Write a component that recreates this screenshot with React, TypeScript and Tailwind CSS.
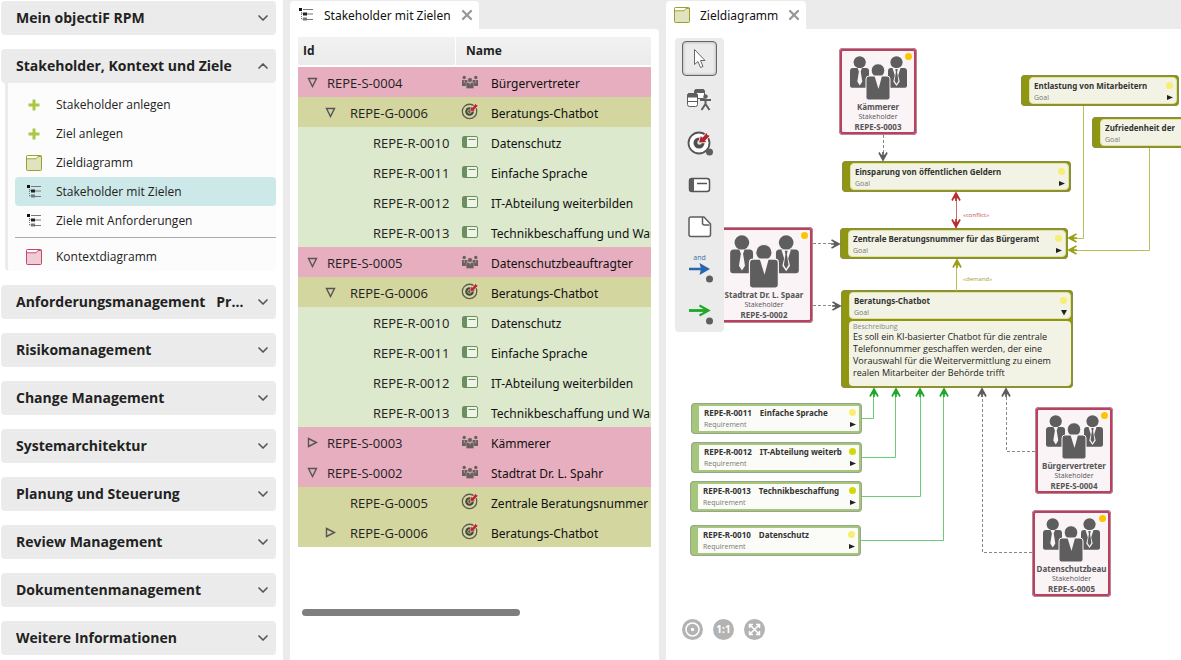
import React, { useState } from 'react'
import { ChevronDown, ChevronUp, X } from 'lucide-react'

type RowKind = 'stakeholder' | 'goal' | 'requirement'

interface TreeRow {
  id: string
  name: string
  kind: RowKind
  state?: 'open' | 'closed'
}

const requirementRows: TreeRow[] = [
  { id: 'REPE-R-0010', name: 'Datenschutz', kind: 'requirement' },
  { id: 'REPE-R-0011', name: 'Einfache Sprache', kind: 'requirement' },
  { id: 'REPE-R-0012', name: 'IT-Abteilung weiterbilden', kind: 'requirement' },
  { id: 'REPE-R-0013', name: 'Technikbeschaffung und Wartung', kind: 'requirement' }
]

const rows: TreeRow[] = [
  { id: 'REPE-S-0004', name: 'Bürgervertreter', kind: 'stakeholder', state: 'open' },
  { id: 'REPE-G-0006', name: 'Beratungs-Chatbot', kind: 'goal', state: 'open' },
  ...requirementRows,
  { id: 'REPE-S-0005', name: 'Datenschutzbeauftragter', kind: 'stakeholder', state: 'open' },
  { id: 'REPE-G-0006', name: 'Beratungs-Chatbot', kind: 'goal', state: 'open' },
  ...requirementRows,
  { id: 'REPE-S-0003', name: 'Kämmerer', kind: 'stakeholder', state: 'closed' },
  { id: 'REPE-S-0002', name: 'Stadtrat Dr. L. Spahr', kind: 'stakeholder', state: 'open' },
  { id: 'REPE-G-0005', name: 'Zentrale Beratungsnummer', kind: 'goal' },
  { id: 'REPE-G-0006', name: 'Beratungs-Chatbot', kind: 'goal', state: 'closed' }
]

const rowColors: Record<RowKind, string> = {
  stakeholder: 'bg-[#e7aebf]',
  goal: 'bg-[#d3d69f]',
  requirement: 'bg-[#dce9cd]'
}

const rowIndent: Record<RowKind, string> = {
  stakeholder: 'pl-[9px]',
  goal: 'pl-[27px]',
  requirement: 'pl-[50px]'
}

const toggleWidth: Record<RowKind, string> = {
  stakeholder: 'w-5',
  goal: 'w-[25px]',
  requirement: 'w-[25px]'
}

const lowerSections = [
  'Anforderungsmanagement\u00a0\u00a0\u00a0Projektmanagement',
  'Risikomanagement',
  'Change Management',
  'Systemarchitektur',
  'Planung und Steuerung',
  'Review Management',
  'Dokumentenmanagement',
  'Weitere Informationen'
]

/* ---------- Icons ---------- */

const PlusIcon = () => (
  <svg width="16" height="16" viewBox="0 0 16 16">
    <path d="M6.5 2.5h3v4h4v3h-4v4h-3v-4h-4v-3h4z" fill="#a9c843" />
  </svg>
)

const DiagramIcon = ({ stroke, fill }: { stroke: string; fill: string }) => (
  <svg width="16" height="16" viewBox="0 0 16 16">
    <rect x="0.5" y="0.5" width="15" height="15" rx="1" fill={fill} stroke={stroke} />
    <path d="M1 1h11l-2 2.5H1z" fill="#fff" />
    <path d="M0.5 3.8h9.5l2-2.3h3.5" fill="none" stroke={stroke} strokeWidth="0.9" />
  </svg>
)

const TreeIcon = () => (
  <svg width="16" height="16" viewBox="0 0 16 16">
    <path d="M3.5 3v9.5M3.5 6.5h3M3.5 12h3" stroke="#777" strokeDasharray="1 1" fill="none" />
    <path d="M5 2.5h10M8 7h7M8 12.5h7" stroke="#777" />
    <rect x="1" y="1" width="3" height="3" fill="#111" />
    <rect x="5" y="5.5" width="4" height="3" fill="#222" />
    <rect x="5" y="10.5" width="4" height="3" fill="#777" />
  </svg>
)

const PeopleIcon = () => (
  <svg width="18" height="14" viewBox="0 0 18 14" fill="#66605f">
    <circle cx="3.2" cy="2.5" r="1.7" />
    <circle cx="14.8" cy="2.5" r="1.7" />
    <path d="M1 5h5.500v6H1zM11.500 5H17v6h-5.500z" />
    <path d="M3.300 5v3M14.700 5v3" stroke="#e7aebf" strokeWidth="0.6" />
    <path d="M5.200 7.500h7.600v6H5.200z" stroke="#e7aebf" strokeWidth="0.4" />
    <circle cx="9" cy="5" r="2.300" stroke="#e7aebf" strokeWidth="0.4" />
    <path d="M8.200 7.600h1.600L9 10z" fill="#e7aebf" />
  </svg>
)

const TargetIcon = () => (
  <svg width="18" height="18" viewBox="0 0 20 20" className="mb-0.5">
    <circle cx="9.500" cy="10.500" r="8" fill="none" stroke="#5a5a50" strokeWidth="1.400" />
    <circle cx="9.500" cy="10.500" r="4.800" fill="#45453f" />
    <path d="M9.500 8.500a2 2 0 1 0 2 2" fill="none" stroke="#d3d69f" />
    <path d="M10 10.500l1-5.500 2 .8L16.500 1l.8 2.200 2.200.8-4.700 4.300 1 1.700z" fill="#c3222b" stroke="#eeeed8" strokeWidth="0.600" />
  </svg>
)

const CardIcon = () => (
  <svg width="16" height="12" viewBox="0 0 16 12">
    <rect x="0.5" y="0.5" width="15" height="11" rx="1.5" fill="#eef5e7" stroke="#6b8f5e" />
    <path d="M1 1h4v10H1z" fill="#6b8f5e" />
    <path d="M6.500 3.500h7" stroke="#6b8f5e" />
  </svg>
)

const StakeholderFigure = ({ width, height }: { width: number; height: number }) => (
  <svg width={width} height={height} viewBox="0 0 57 44" fill="#5e5e5e" className="shrink-0">
    <circle cx="9.7" cy="6.3" r="6.1" />
    <circle cx="46.5" cy="6.3" r="6.1" />
    <path d="M0 15q0-3 3-3h13q3 0 3 3v16.700H2q-2 0-2-2z" />
    <path d="M38 15q0-3 3-3h13q3 0 3 3v14.700q0 2-2 2H38z" />
    <path d="M7.500 12h4.500l-1.300 3.500 1.600 10-2.500 4-2.500-4 1.600-10z" fill="#faf4f7" />
    <path d="M42.500 12h8l-2.300 7.500 1.500 6-3.200 4.500-3.200-4.500 1.500-6z" fill="#faf4f7" />
    <path d="M45.300 13h2.400l-.6 3 1.300 9-1.900 3-1.900-3 1.300-9z" />
    <circle cx="28" cy="14.500" r="6.800" stroke="#faf4f7" strokeWidth="1" />
    <path d="M16 23q0-3 3-3h18q3 0 3 3v18.500q0 2.500-2.500 2.500h-19q-2.500 0-2.500-2.500z" stroke="#faf4f7" strokeWidth="1" />
    <path d="M24.500 20h7.500l-3.500 13z" fill="#faf4f7" />
  </svg>
)

const Triangle = ({ open }: { open: boolean }) => (
  <svg width="11" height="11" viewBox="0 0 11 11" fill="none" stroke="#555" strokeWidth="1.4">
    {open ? <path d="M1.500 1.500h8L5.500 9.500z" /> : <path d="M1.500 1.500v8l8-4z" />}
  </svg>
)

/* ---------- Sidebar ---------- */

const SectionHeader = ({ title, open = false }: { title: string; open?: boolean }) => (
  <button
    type="button"
    aria-expanded={open}
    className="flex h-[34px] w-full shrink-0 items-center justify-between rounded bg-[#ebebeb] pr-[5px] pl-[15px] text-left"
  >
    <span className="w-[229px] truncate text-sm font-bold text-[#222]">{title}</span>
    {open ? (
      <ChevronUp className="h-4 w-4 text-[#555]" strokeWidth={2.5} />
    ) : (
      <ChevronDown className="h-4 w-4 text-[#555]" strokeWidth={2.5} />
    )}
  </button>
)

interface SidebarLinkProps {
  icon: React.ReactNode
  label: string
  active?: boolean
}

const SidebarLink: React.FC<SidebarLinkProps> = ({ icon, label, active }) => (
  <a
    href="#"
    className={`flex h-[29px] items-center gap-3.5 rounded pl-[11px] text-xs text-[#222] ${active ? 'bg-[#cde8e8]' : ''}`}
  >
    {icon}
    {label}
  </a>
)

const Sidebar = () => (
  <nav className="flex w-[283px] shrink-0 flex-col gap-3.5 bg-white pt-px pr-[7px] pl-px">
    <SectionHeader title="Mein objectiF RPM" />
    <div>
      <SectionHeader title="Stakeholder, Kontext und Ziele" open />
      <div className="ml-1 rounded-b border-l-3 border-[#ebebeb] bg-[#fcfcfc] pt-[7px] pl-[7px]">
        <SidebarLink icon={<PlusIcon />} label="Stakeholder anlegen" />
        <SidebarLink icon={<PlusIcon />} label="Ziel anlegen" />
        <SidebarLink icon={<DiagramIcon stroke="#99a02c" fill="#e0e3bd" />} label="Zieldiagramm" />
        <SidebarLink icon={<TreeIcon />} label="Stakeholder mit Zielen" active />
        <SidebarLink icon={<TreeIcon />} label="Ziele mit Anforderungen" />
        <hr className="mt-0.5 mb-1 border-[#aaa]" />
        <SidebarLink icon={<DiagramIcon stroke="#c9446c" fill="#efcbd4" />} label="Kontextdiagramm" />
      </div>
    </div>
    {lowerSections.map((title) => (
      <SectionHeader key={title} title={title} />
    ))}
  </nav>
)

/* ---------- Tree table ---------- */

const Tab = ({ icon, label }: { icon: React.ReactNode; label: string }) => (
  <div className="mt-px flex h-7 w-fit items-center rounded-t bg-white pr-1 pl-2">
    {icon}
    <span className="ml-2.5 pt-0.5 font-['Noto_Sans',sans-serif] text-xs text-[#111]">{label}</span>
    <button type="button" aria-label={`${label} schließen`} className="ml-2">
      <X className="h-4 w-4 text-[#999]" strokeWidth={3.5} />
    </button>
  </div>
)

const RowIcon = ({ kind }: { kind: RowKind }) => {
  if (kind === 'stakeholder') return <PeopleIcon />
  if (kind === 'goal') return <TargetIcon />
  return <CardIcon />
}

const TreePanel = () => (
  <section className="flex w-[369px] shrink-0 flex-col">
    <Tab icon={<TreeIcon />} label="Stakeholder mit Zielen" />
    <div className="flex flex-1 flex-col rounded-tr bg-white px-2 pt-2">
      <table className="w-full table-fixed border-separate border-spacing-0 text-[13px] text-[#222]">
        <thead>
          <tr className="h-[30px] text-left text-xs">
            <th className="w-[158px] border-r border-b-2 border-white bg-linear-to-b from-[#f2f2f2] to-[#ebebeb] px-[5px] font-bold">Id</th>
            <th className="border-b-2 border-white bg-linear-to-b from-[#f2f2f2] to-[#ebebeb] px-2.5 font-bold">Name</th>
          </tr>
        </thead>
        <tbody>
          {rows.map((row, index) => (
            <tr key={index} className={`h-[30px] ${rowColors[row.kind]}`}>
              <td className="p-0">
                <div className={`flex items-center ${rowIndent[row.kind]}`}>
                  <span className={`flex shrink-0 ${toggleWidth[row.kind]}`}>
                    {row.state && (
                      <button type="button" aria-label={`${row.id} umschalten`}>
                        <Triangle open={row.state === 'open'} />
                      </button>
                    )}
                  </span>
                  <span className="pt-[3px] whitespace-nowrap">{row.id}</span>
                </div>
              </td>
              <td className="overflow-hidden p-0">
                <div className="flex items-center gap-3 pl-[5px]">
                  <span className="flex w-[18px] shrink-0 justify-center">
                    <RowIcon kind={row.kind} />
                  </span>
                  <span className="pt-[3px] font-['Noto_Sans',sans-serif] text-xs whitespace-nowrap text-[#111]">{row.name}</span>
                </div>
              </td>
            </tr>
          ))}
        </tbody>
      </table>
      <div className="mt-auto mb-11 ml-1 h-[7px] w-[218px] rounded-full bg-[#7f7f7f]" />
    </div>
  </section>
)

/* ---------- Diagram ---------- */

interface NodeBox {
  x: number
  y: number
  w: number
  h: number
}

const stakeholders: (NodeBox & { name: string; id: string; large?: boolean })[] = [
  { x: 173, y: 19, w: 78, h: 87, name: 'Kämmerer', id: 'REPE-S-0003' },
  { x: 49, y: 198, w: 98, h: 96, name: 'Stadtrat Dr. L. Spaar', id: 'REPE-S-0002', large: true },
  { x: 369, y: 378, w: 78, h: 87, name: 'Bürgervertreter', id: 'REPE-S-0004' },
  { x: 366, y: 481, w: 79, h: 87, name: 'Datenschutzbeau', id: 'REPE-S-0005' }
]

const goals: (NodeBox & { name: string; text?: string })[] = [
  { x: 176, y: 132, w: 229, h: 31, name: 'Einsparung von öffentlichen Geldern' },
  { x: 174, y: 199, w: 228, h: 31, name: 'Zentrale Beratungsnummer für das Bürgeramt' },
  { x: 355, y: 46, w: 158, h: 31, name: 'Entlastung von Mitarbeitern' },
  { x: 426, y: 88, w: 158, h: 31, name: 'Zufriedenheit der' },
  {
    x: 175,
    y: 261,
    w: 232,
    h: 98,
    name: 'Beratungs-Chatbot',
    text: 'Es soll ein KI-basierter Chatbot für die zentrale Telefonnummer geschaffen werden, der eine Vorauswahl für die Weitervermittlung zu einem realen Mitarbeiter der Behörde trifft'
  }
]

const requirements: (NodeBox & { name: string; id: string; dot: string })[] = [
  { x: 25, y: 374, w: 171, h: 31, id: 'REPE-R-0011', name: 'Einfache Sprache', dot: 'bg-[#f8ee72]' },
  { x: 25, y: 413, w: 171, h: 31, id: 'REPE-R-0012', name: 'IT-Abteilung weiterb', dot: 'bg-[#d3d80c]' },
  { x: 24, y: 452, w: 172, h: 31, id: 'REPE-R-0013', name: 'Technikbeschaffung', dot: 'bg-[#d3d80c]' },
  { x: 24, y: 496, w: 171, h: 31, id: 'REPE-R-0010', name: 'Datenschutz', dot: 'bg-[#f8ee72]' }
]

const boxStyle = ({ x, y, w, h }: NodeBox) => ({ left: x, top: y, width: w, height: h })

const Expander = ({ open = false }: { open?: boolean }) => (
  <button type="button" aria-label="Details" className="shrink-0">
    <svg width="6" height="7" viewBox="0 0 6 7" fill="#222">
      {open ? <path d="M0 1h6L3 6.500z" /> : <path d="M0 1v5l6-2.500z" />}
    </svg>
  </button>
)

interface NodeHeadProps {
  title: React.ReactNode
  subtitle: string
  dot: string
  open?: boolean
}

const NodeHead: React.FC<NodeHeadProps> = ({ title, subtitle, dot, open }) => (
  <div className="flex justify-between pr-[3px] pl-1">
    <div className="min-w-0 text-[#333]">
      <div className="overflow-hidden font-['Noto_Sans',sans-serif] text-[8px] leading-[12px] font-bold whitespace-nowrap">{title}</div>
      <div className="text-[7px] leading-[11px] text-[#777]">{subtitle}</div>
    </div>
    <div className="flex shrink-0 flex-col items-center justify-between pt-0.5 pb-0.5">
      <span className={`h-[7px] w-[7px] rounded-full ${dot}`} />
      <Expander open={open} />
    </div>
  </div>
)

// Arrow head with its tip at (x, y), pointing up before rotation
const Head = ({ x, y, angle = 0, color }: { x: number; y: number; angle?: number; color: string }) => (
  <path
    d="M-4 8.500 0 1l4 7.500M0 1v8M-2 6 0 3l2 3"
    transform={`translate(${x} ${y}) rotate(${angle})`}
    fill="none"
    stroke={color}
    strokeWidth="1.700"
  />
)

const Connections = () => (
  <svg className="pointer-events-none absolute inset-0 h-full w-full">
    <g fill="none" stroke="#888" strokeDasharray="3 2">
      <path d="M217.500 106v24" />
      <path d="M147 214.500h26" />
      <path d="M147 276.500h27" />
      <path d="M369 422.500h-28.500V361" />
      <path d="M366 523.500h-49.500V361" />
    </g>
    <g fill="none" stroke="#bcc05a">
      <path d="M417.500 77v132.500H403" />
      <path d="M483.500 119v102.500H403" />
      <path d="M290.500 232v30" />
    </g>
    <g fill="none" stroke="#6ccc74">
      <path d="M195 389.500h12.500V361" />
      <path d="M196 428.500h33.500V361" />
      <path d="M196 467.500h58.500V361" />
      <path d="M195 511.500h82.500V361" />
    </g>
    <path d="M290.500 164v35" stroke="#cf6b6b" />
    <Head x={217} y={132} angle={180} color="#5c5c5c" />
    <Head x={174} y={215} angle={90} color="#5c5c5c" />
    <Head x={175} y={277} angle={90} color="#5c5c5c" />
    <Head x={340} y={359} color="#5c5c5c" />
    <Head x={316} y={359} color="#5c5c5c" />
    <Head x={208} y={359} color="#1ea82a" />
    <Head x={230} y={359} color="#1ea82a" />
    <Head x={254} y={359} color="#1ea82a" />
    <Head x={278} y={359} color="#1ea82a" />
    <Head x={402} y={209} angle={-90} color="#9a9f14" />
    <Head x={402} y={221} angle={-90} color="#9a9f14" />
    <Head x={291} y={230} color="#9a9f14" />
    <Head x={290} y={163} color="#b82e2e" />
    <Head x={290} y={199} angle={180} color="#b82e2e" />
    <text x="297" y="188" fontSize="6" fill="#c94a4a">«conflict»</text>
    <text x="297" y="252" fontSize="6" fill="#9fa32a">«demand»</text>
  </svg>
)

const Toolbar = () => {
  const [tool, setTool] = useState('select')

  const tools = [
    {
      name: 'select',
      icon: <path d="M12.500 8.500v15l3.500-3 2.500 6 2.500-1-2.500-6h4.500z" fill="#fff" stroke="#666" />
    },
    {
      name: 'context',
      icon: (
        <g>
          <path d="M12.500 8.500q0-2 2-2h6q2 0 2 2v7h-10z" fill="#fff" stroke="#5e5e5e" />
          <path d="M12 10q0-4 3-4h5q3 0 3 4z" fill="#5e5e5e" />
          <rect x="5.500" y="10.500" width="10" height="13" rx="2" fill="#fff" stroke="#5e5e5e" />
          <path d="M5.500 14v-1.500q0-2 2-2h6q2 0 2 2V14zM5.500 18.500h10" fill="#5e5e5e" stroke="#5e5e5e" />
          <circle cx="23.500" cy="13.500" r="2.200" fill="#5e5e5e" />
          <path d="M18 17h11M23.500 16v5l-4 6M23.500 21l4 6" fill="none" stroke="#5e5e5e" strokeWidth="2" />
        </g>
      )
    },
    {
      name: 'goal',
      icon: (
        <g>
          <circle cx="17" cy="18" r="10.500" fill="#fff" stroke="#555" strokeWidth="1.800" />
          <circle cx="17" cy="18" r="5.500" fill="#4f4f4f" />
          <circle cx="17.500" cy="17.500" r="2.200" fill="#ddd" />
          <path d="m16.500 18 2-7.500 2 1.700L25 7l.7 2.800 2.800.7-5 5 1.500 2z" fill="#b5262c" stroke="#fff" strokeWidth="0.800" />
          <circle cx="27.500" cy="27" r="3.500" fill="#5e5e5e" />
        </g>
      )
    },
    {
      name: 'requirement',
      icon: (
        <g>
          <rect x="7.500" y="11.500" width="20" height="13" rx="2.500" fill="#fff" stroke="#555" strokeWidth="1.500" />
          <path d="M8 12h4v12H8z" fill="#5e5e5e" />
          <path d="M15 16.500h10" stroke="#555" strokeWidth="1.500" />
        </g>
      )
    },
    {
      name: 'note',
      icon: (
        <g fill="#fff" stroke="#5e5e5e" strokeWidth="1.500">
          <path d="M9 8h13l6.500 7v10.500q0 2-2 2H9q-2 0-2-2V10q0-2 2-2z" />
          <path d="M20.500 8v6q0 2 2 2h5" />
        </g>
      )
    },
    {
      name: 'and',
      icon: (
        <g>
          <text x="17.500" y="9" fontSize="7" textAnchor="middle" fill="#3b6fa8">and</text>
          <path d="M7 18h14" stroke="#2766ae" strokeWidth="2.500" />
          <path d="M17.500 12 28 18l-10.500 6 1.500-6z" fill="#2766ae" />
          <circle cx="27.500" cy="28" r="3.500" fill="#5e5e5e" />
        </g>
      )
    },
    {
      name: 'demand',
      icon: (
        <g>
          <path d="M7 17.500h18" stroke="#1ea82a" strokeWidth="2.800" />
          <path d="m17.500 12.500 9 5-9 5" fill="none" stroke="#1ea82a" strokeWidth="2.200" />
          <circle cx="27.500" cy="28" r="3.500" fill="#5e5e5e" />
        </g>
      )
    }
  ]

  return (
    <div className="absolute top-[9px] left-[9px] flex w-[49px] flex-col items-center gap-[7px] rounded bg-[#ebebeb] pt-[3px] pb-1">
      {tools.map(({ name, icon }) => (
        <button
          key={name}
          type="button"
          aria-label={name}
          onClick={() => setTool(name)}
          className={`flex h-[35px] w-[35px] items-center justify-center rounded border ${
            tool === name ? 'border-[#666] shadow-[inset_0_0_3px_#999]' : 'border-transparent'
          }`}
        >
          <svg width="35" height="35" viewBox="0 0 35 35" className="shrink-0">{icon}</svg>
        </button>
      ))}
    </div>
  )
}

const ZoomBar = () => (
  <div className="absolute bottom-5 left-4 flex gap-2.5 text-white">
    <button type="button" aria-label="Zentrieren" className="h-[21px] w-[21px] rounded-full bg-[#b3b3b3]">
      <svg viewBox="0 0 21 21" fill="none" stroke="currentColor" strokeWidth="1.500">
        <circle cx="10.500" cy="10.500" r="6.500" />
        <circle cx="10.500" cy="10.500" r="1.700" fill="currentColor" stroke="none" />
      </svg>
    </button>
    <button type="button" className="h-[21px] w-[21px] rounded-full bg-[#b3b3b3] text-center text-[10px] leading-[21px] font-bold">
      1:1
    </button>
    <button type="button" aria-label="Einpassen" className="h-[21px] w-[21px] rounded-full bg-[#b3b3b3]">
      <svg viewBox="0 0 21 21" fill="none" stroke="currentColor" strokeWidth="1.500">
        <path d="m5.500 5.500 10 10M15.500 5.500l-10 10M5.500 9V5.500H9M12 5.500h3.500V9M15.500 12v3.500H12M9 15.500H5.500V12" />
      </svg>
    </button>
  </div>
)

const DiagramPanel = () => (
  <section className="flex min-w-0 flex-1 flex-col">
    <Tab icon={<DiagramIcon stroke="#99a02c" fill="#e0e3bd" />} label="Zieldiagramm" />
    <div className="relative flex-1 overflow-hidden bg-white">
      {stakeholders.map((node) => (
        <div
          key={node.id}
          style={boxStyle(node)}
          className="absolute flex flex-col items-center rounded-sm border-3 border-[#b9405f] bg-[#faf4f7] pt-[5px] text-[8px] leading-[10px] whitespace-nowrap text-[#555] outline -outline-offset-1 outline-[#b58a96]"
        >
          <span className="absolute top-0.5 right-0.5 h-[7px] w-[7px] rounded-full bg-[#ffc400]" />
          {node.large ? <StakeholderFigure width={69} height={53} /> : <StakeholderFigure width={57} height={44} />}
          <div className="mt-0.5 font-['Noto_Sans',sans-serif] font-bold">{node.name}</div>
          <div className="text-[7px]">Stakeholder</div>
          <div className="font-['Noto_Sans',sans-serif] font-bold">{node.id}</div>
        </div>
      ))}
      {goals.map((node) => (
        <div
          key={node.name}
          style={boxStyle(node)}
          className="absolute flex flex-col gap-0.5 rounded border-2 border-l-8 border-[#8f960f] bg-[#8f960f] outline -outline-offset-1 outline-[#8b8b4a]"
        >
          <div className="rounded-sm border border-[#dfe2a4] bg-[#f2f3e5] pt-0.5">
            <NodeHead title={node.name} subtitle="Goal" dot="bg-[#f8ee72]" open={!!node.text} />
          </div>
          {node.text && (
            <div className="flex-1 rounded-sm bg-[#f2f3e5] pt-px pr-4 pl-1">
              <div className="text-[7px] leading-[9px] text-[#888]">Beschreibung</div>
              <p className="text-[9px] leading-[12px] text-[#222]">{node.text}</p>
            </div>
          )}
        </div>
      ))}
      {requirements.map((node) => (
        <div
          key={node.id}
          style={boxStyle(node)}
          className="absolute rounded border-3 border-l-8 border-[#a5c77c] bg-[#fbfcf8] pt-px pl-px outline -outline-offset-1 outline-[#98a58a]"
        >
          <NodeHead
            title={
              <>
                <span className="mr-2">{node.id}</span>
                {node.name}
              </>
            }
            subtitle="Requirement"
            dot={node.dot}
          />
        </div>
      ))}
      <Connections />
      <Toolbar />
      <ZoomBar />
    </div>
  </section>
)

export default function App() {
  return (
    <div className="flex min-h-screen gap-[7px] overflow-hidden bg-[#ebebeb] font-['Open_Sans',sans-serif]">
      <Sidebar />
      <TreePanel />
      <DiagramPanel />
    </div>
  )
}
